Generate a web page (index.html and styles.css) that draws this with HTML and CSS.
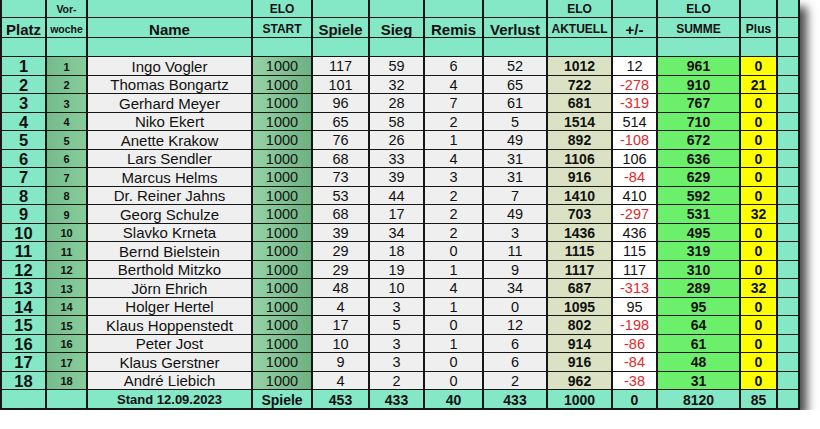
FILE: index.html
```html
<!DOCTYPE html>
<html lang="de">
<head>
<meta charset="utf-8">
<title>ELO Tabelle</title>
<link rel="stylesheet" href="styles.css">
</head>
<body>
<div class="sheet">
  <div class="row hdr1">
    <div class="c aq"></div><div class="c aq small">Vor-</div><div class="c aq"></div><div class="c aq small">ELO</div>
    <div class="c aq"></div><div class="c aq"></div><div class="c aq"></div><div class="c aq"></div>
    <div class="c aq small">ELO</div><div class="c aq"></div><div class="c aq small">ELO</div><div class="c aq"></div><div class="c aq"></div>
  </div>
  <div class="row hdr2">
    <div class="c aq big">Platz</div><div class="c aq small">woche</div><div class="c aq big">Name</div><div class="c aq small">START</div>
    <div class="c aq big">Spiele</div><div class="c aq big">Sieg</div><div class="c aq big">Remis</div><div class="c aq big">Verlust</div>
    <div class="c aq small">AKTUELL</div><div class="c aq big">+/-</div><div class="c aq small">SUMME</div><div class="c aq small">Plus</div><div class="c aq"></div>
  </div>
  <div class="row hdr3">
    <div class="c aq"></div><div class="c aq"></div><div class="c aq"></div><div class="c aq"></div><div class="c aq"></div><div class="c aq"></div><div class="c aq"></div>
    <div class="c aq"></div><div class="c aq"></div><div class="c aq"></div><div class="c aq"></div><div class="c aq"></div><div class="c aq"></div>
  </div>

  <div class="row data"><div class="c aq rank">1</div><div class="c prev">1</div><div class="c name">Ingo Vogler</div><div class="c start">1000</div><div class="c gray">117</div><div class="c gray">59</div><div class="c gray">6</div><div class="c gray">52</div><div class="c akt">1012</div><div class="c diff">12</div><div class="c sum">961</div><div class="c plus">0</div><div class="c aq"></div></div>
  <div class="row data"><div class="c aq rank">2</div><div class="c prev">2</div><div class="c name">Thomas Bongartz</div><div class="c start">1000</div><div class="c gray">101</div><div class="c gray">32</div><div class="c gray">4</div><div class="c gray">65</div><div class="c akt">722</div><div class="c diff neg">-278</div><div class="c sum">910</div><div class="c plus">21</div><div class="c aq"></div></div>
  <div class="row data"><div class="c aq rank">3</div><div class="c prev">3</div><div class="c name">Gerhard Meyer</div><div class="c start">1000</div><div class="c gray">96</div><div class="c gray">28</div><div class="c gray">7</div><div class="c gray">61</div><div class="c akt">681</div><div class="c diff neg">-319</div><div class="c sum">767</div><div class="c plus">0</div><div class="c aq"></div></div>
  <div class="row data"><div class="c aq rank">4</div><div class="c prev">4</div><div class="c name">Niko Ekert</div><div class="c start">1000</div><div class="c gray">65</div><div class="c gray">58</div><div class="c gray">2</div><div class="c gray">5</div><div class="c akt">1514</div><div class="c diff">514</div><div class="c sum">710</div><div class="c plus">0</div><div class="c aq"></div></div>
  <div class="row data"><div class="c aq rank">5</div><div class="c prev">5</div><div class="c name">Anette Krakow</div><div class="c start">1000</div><div class="c gray">76</div><div class="c gray">26</div><div class="c gray">1</div><div class="c gray">49</div><div class="c akt">892</div><div class="c diff neg">-108</div><div class="c sum">672</div><div class="c plus">0</div><div class="c aq"></div></div>
  <div class="row data"><div class="c aq rank">6</div><div class="c prev">6</div><div class="c name">Lars Sendler</div><div class="c start">1000</div><div class="c gray">68</div><div class="c gray">33</div><div class="c gray">4</div><div class="c gray">31</div><div class="c akt">1106</div><div class="c diff">106</div><div class="c sum">636</div><div class="c plus">0</div><div class="c aq"></div></div>
  <div class="row data"><div class="c aq rank">7</div><div class="c prev">7</div><div class="c name">Marcus Helms</div><div class="c start">1000</div><div class="c gray">73</div><div class="c gray">39</div><div class="c gray">3</div><div class="c gray">31</div><div class="c akt">916</div><div class="c diff neg">-84</div><div class="c sum">629</div><div class="c plus">0</div><div class="c aq"></div></div>
  <div class="row data"><div class="c aq rank">8</div><div class="c prev">8</div><div class="c name">Dr. Reiner Jahns</div><div class="c start">1000</div><div class="c gray">53</div><div class="c gray">44</div><div class="c gray">2</div><div class="c gray">7</div><div class="c akt">1410</div><div class="c diff">410</div><div class="c sum">592</div><div class="c plus">0</div><div class="c aq"></div></div>
  <div class="row data"><div class="c aq rank">9</div><div class="c prev">9</div><div class="c name">Georg Schulze</div><div class="c start">1000</div><div class="c gray">68</div><div class="c gray">17</div><div class="c gray">2</div><div class="c gray">49</div><div class="c akt">703</div><div class="c diff neg">-297</div><div class="c sum">531</div><div class="c plus">32</div><div class="c aq"></div></div>
  <div class="row data"><div class="c aq rank">10</div><div class="c prev">10</div><div class="c name">Slavko Krneta</div><div class="c start">1000</div><div class="c gray">39</div><div class="c gray">34</div><div class="c gray">2</div><div class="c gray">3</div><div class="c akt">1436</div><div class="c diff">436</div><div class="c sum">495</div><div class="c plus">0</div><div class="c aq"></div></div>
  <div class="row data"><div class="c aq rank">11</div><div class="c prev">11</div><div class="c name">Bernd Bielstein</div><div class="c start">1000</div><div class="c gray">29</div><div class="c gray">18</div><div class="c gray">0</div><div class="c gray">11</div><div class="c akt">1115</div><div class="c diff">115</div><div class="c sum">319</div><div class="c plus">0</div><div class="c aq"></div></div>
  <div class="row data"><div class="c aq rank">12</div><div class="c prev">12</div><div class="c name">Berthold Mitzko</div><div class="c start">1000</div><div class="c gray">29</div><div class="c gray">19</div><div class="c gray">1</div><div class="c gray">9</div><div class="c akt">1117</div><div class="c diff">117</div><div class="c sum">310</div><div class="c plus">0</div><div class="c aq"></div></div>
  <div class="row data"><div class="c aq rank">13</div><div class="c prev">13</div><div class="c name">Jörn Ehrich</div><div class="c start">1000</div><div class="c gray">48</div><div class="c gray">10</div><div class="c gray">4</div><div class="c gray">34</div><div class="c akt">687</div><div class="c diff neg">-313</div><div class="c sum">289</div><div class="c plus">32</div><div class="c aq"></div></div>
  <div class="row data"><div class="c aq rank">14</div><div class="c prev">14</div><div class="c name">Holger Hertel</div><div class="c start">1000</div><div class="c gray">4</div><div class="c gray">3</div><div class="c gray">1</div><div class="c gray">0</div><div class="c akt">1095</div><div class="c diff">95</div><div class="c sum">95</div><div class="c plus">0</div><div class="c aq"></div></div>
  <div class="row data"><div class="c aq rank">15</div><div class="c prev">15</div><div class="c name">Klaus Hoppenstedt</div><div class="c start">1000</div><div class="c gray">17</div><div class="c gray">5</div><div class="c gray">0</div><div class="c gray">12</div><div class="c akt">802</div><div class="c diff neg">-198</div><div class="c sum">64</div><div class="c plus">0</div><div class="c aq"></div></div>
  <div class="row data"><div class="c aq rank">16</div><div class="c prev">16</div><div class="c name">Peter Jost</div><div class="c start">1000</div><div class="c gray">10</div><div class="c gray">3</div><div class="c gray">1</div><div class="c gray">6</div><div class="c akt">914</div><div class="c diff neg">-86</div><div class="c sum">61</div><div class="c plus">0</div><div class="c aq"></div></div>
  <div class="row data"><div class="c aq rank">17</div><div class="c prev">17</div><div class="c name">Klaus Gerstner</div><div class="c start">1000</div><div class="c gray">9</div><div class="c gray">3</div><div class="c gray">0</div><div class="c gray">6</div><div class="c akt">916</div><div class="c diff neg">-84</div><div class="c sum">48</div><div class="c plus">0</div><div class="c aq"></div></div>
  <div class="row data"><div class="c aq rank">18</div><div class="c prev">18</div><div class="c name">André Liebich</div><div class="c start">1000</div><div class="c gray">4</div><div class="c gray">2</div><div class="c gray">0</div><div class="c gray">2</div><div class="c akt">962</div><div class="c diff neg">-38</div><div class="c sum">31</div><div class="c plus">0</div><div class="c aq"></div></div>

  <div class="row total">
    <div class="c aq"></div><div class="c aq"></div><div class="c aq stand">Stand 12.09.2023</div><div class="c aq tb">Spiele</div>
    <div class="c aq tb">453</div><div class="c aq tb">433</div><div class="c aq tb">40</div><div class="c aq tb">433</div>
    <div class="c aq tb">1000</div><div class="c aq tb">0</div><div class="c aq tb">8120</div><div class="c aq tb">85</div><div class="c aq"></div>
  </div>
</div>
</body>
</html>
```

FILE: styles.css
```css
* { box-sizing: border-box; }
html, body { margin: 0; padding: 0; background: #ffffff; }
body { font-family: "Liberation Sans", Arial, sans-serif; color: #111; }

.sheet {
  display: grid;
  width: 800px;
  grid-template-columns: 43px 39px 163px 58px 55px 53px 57px 62px 63px 43px 81px 35px 20px;
  grid-template-rows: 17px 19px 18px repeat(18, 17.5px) 18px;
  column-gap: 2px;
  row-gap: 1px;
  background: #161616;
  border-left: 2px solid #161616;
  border-right: 2px solid #161616;
  border-bottom: 2px solid #161616;
  box-shadow: 7px 7px 9px rgba(0, 0, 0, 0.7);
}

.row { display: contents; }

.c {
  display: flex;
  align-items: center;
  justify-content: center;
  font-size: 14.5px;
  line-height: 1;
  white-space: nowrap;
  overflow: hidden;
}

.aq { background: #84e8c7; }

.small { font-size: 12px; font-weight: bold; }
.hdr1 .small { padding-top: 1px; }
.hdr2 .c { padding-top: 3px; }
.hdr2 .big { font-size: 15px; font-weight: bold; }
.hdr2 .small { font-size: 12px; }
.hdr2 .c:nth-child(2) { font-size: 10.5px; }
.hdr1 .c:nth-child(2) { font-size: 10.5px; }

.data .c { padding-top: 1px; }
.rank { font-size: 16.5px; font-weight: bold; }
.prev {
  font-size: 11px;
  font-weight: bold;
  background: linear-gradient(90deg, #74bb8b, #88cc9b);
  padding-top: 3px !important;
}
.name { background: #efefef; font-size: 15px; }
.start { background: linear-gradient(90deg, #93d3a5, #6fb083); }
.gray { background: #efefef; }
.akt { background: #dbe1c3; font-weight: bold; font-size: 14px; }
.diff { background: #ffffff; }
.neg { color: #e2292a; }
.sum { background: #6cf06c; font-weight: bold; font-size: 14px; }
.plus { background: #ffff00; font-weight: bold; font-size: 14px; }

.total .c { padding-top: 1px; }
.stand { font-size: 13px; font-weight: bold; }
.tb { font-size: 14px; font-weight: bold; }
```
